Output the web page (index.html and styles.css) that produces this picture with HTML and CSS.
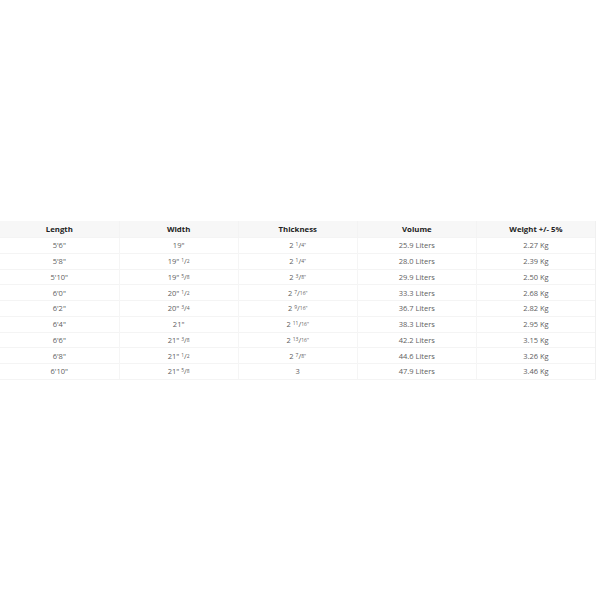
FILE: index.html
```html
<!DOCTYPE html>
<html>
<head>
<meta charset="utf-8">
<link rel="stylesheet" href="styles.css">
</head>
<body>
<div class="page">
<table class="specs">
<thead>
<tr><th>Length</th><th>Width</th><th>Thickness</th><th>Volume</th><th>Weight +/- 5%</th></tr>
</thead>
<tbody>
<tr><td>5'6"</td><td>19"</td><td>2 <sup>1</sup>/<sub>4"</sub></td><td>25.9 Liters</td><td>2.27 Kg</td></tr>
<tr><td>5'8"</td><td>19" <sup>1</sup>/<sub>2</sub></td><td>2 <sup>1</sup>/<sub>4"</sub></td><td>28.0 Liters</td><td>2.39 Kg</td></tr>
<tr><td>5'10"</td><td>19" <sup>5</sup>/<sub>8</sub></td><td>2 <sup>3</sup>/<sub>8"</sub></td><td>29.9 Liters</td><td>2.50 Kg</td></tr>
<tr><td>6'0"</td><td>20" <sup>1</sup>/<sub>2</sub></td><td>2 <sup>7</sup>/<sub>16"</sub></td><td>33.3 Liters</td><td>2.68 Kg</td></tr>
<tr><td>6'2"</td><td>20" <sup>3</sup>/<sub>4</sub></td><td>2 <sup>9</sup>/<sub>16"</sub></td><td>36.7 Liters</td><td>2.82 Kg</td></tr>
<tr><td>6'4"</td><td>21"</td><td>2 <sup>11</sup>/<sub>16"</sub></td><td>38.3 Liters</td><td>2.95 Kg</td></tr>
<tr><td>6'6"</td><td>21" <sup>3</sup>/<sub>8</sub></td><td>2 <sup>13</sup>/<sub>16"</sub></td><td>42.2 Liters</td><td>3.15 Kg</td></tr>
<tr><td>6'8"</td><td>21" <sup>1</sup>/<sub>2</sub></td><td>2 <sup>7</sup>/<sub>8"</sub></td><td>44.6 Liters</td><td>3.26 Kg</td></tr>
<tr><td>6'10"</td><td>21" <sup>5</sup>/<sub>8</sub></td><td>3</td><td>47.9 Liters</td><td>3.46 Kg</td></tr>
</tbody>
</table>
</div>
</body>
</html>
```
FILE: styles.css
```css
html, body {
  margin: 0;
  padding: 0;
  background: #ffffff;
}
.page {
  padding-top: 221px;
  width: 596px;
}
.specs {
  width: 596px;
  border-collapse: collapse;
  table-layout: fixed;
  font-family: "Open Sans", "Noto Sans", sans-serif;
  font-size: 7.5px;
  color: #606060;
}
.specs th {
  height: 16px;
  padding: 0;
  background: #f7f7f7;
  color: #222222;
  font-weight: 700;
  font-size: 7.8px;
  text-align: center;
  border-right: 1px solid #f3f3f3;
}
.specs td {
  height: 15.75px;
  padding: 0;
  text-align: center;
  border-top: 1px solid #f4f4f4;
  border-right: 1px solid #f5f5f5;
  box-sizing: border-box;
}
.specs th:last-child, .specs td:last-child {
  border-right: 1px solid #f0f0f0;
}
.specs tbody tr:last-child td {
  border-bottom: 1px solid #f4f4f4;
}
.specs sup, .specs sub {
  font-size: 5px;
  line-height: 0;
}
.specs sup {
  vertical-align: 2.5px;
}
.specs sub {
  vertical-align: 1.5px;
}
```
